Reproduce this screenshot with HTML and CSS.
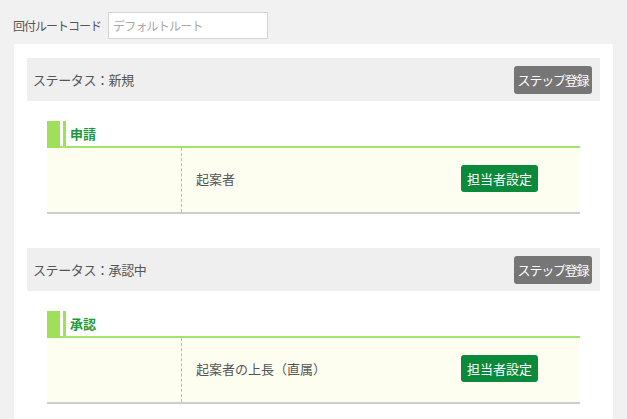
FILE: index.html
```html
<!DOCTYPE html>
<html lang="ja">
<head>
<meta charset="utf-8">
<link rel="stylesheet" href="styles.css">
</head>
<body>
<div class="top">
  <span class="label">回付ルートコード</span>
  <input class="code" type="text" placeholder="デフォルトルート">
</div>
<div class="panel">
  <div class="status">
    <span class="status-text">ステータス：新規</span>
    <button class="btn-step">ステップ登録</button>
  </div>
  <div class="step">
    <div class="step-title"><span class="mark"></span><span class="title-text">申請</span></div>
    <div class="step-body">
      <div class="cell-left"></div>
      <div class="cell-main">
        <span class="who">起案者</span>
        <button class="btn-assign">担当者設定</button>
      </div>
    </div>
  </div>
  <div class="status second">
    <span class="status-text">ステータス：承認中</span>
    <button class="btn-step">ステップ登録</button>
  </div>
  <div class="step">
    <div class="step-title"><span class="mark"></span><span class="title-text">承認</span></div>
    <div class="step-body">
      <div class="cell-left"></div>
      <div class="cell-main">
        <span class="who">起案者の上長（直属）</span>
        <button class="btn-assign">担当者設定</button>
      </div>
    </div>
  </div>
</div>
</body>
</html>
```
FILE: styles.css
```css
html, body {
  margin: 0;
  padding: 0;
}
body {
  background: #f1f1f1;
  font-family: "Noto Sans CJK JP", "Noto Sans", sans-serif;
  color: #555;
}
.top {
  display: flex;
  align-items: center;
  padding: 12px 0 0 13px;
}
.label {
  font-size: 12px;
  letter-spacing: -1px;
  color: #555;
  width: 95px;
}
.code {
  box-sizing: border-box;
  width: 160px;
  height: 27px;
  margin: 0;
  border: 1px solid #d4d4d4;
  background: #fff;
  padding: 0 4px;
  font-family: inherit;
  font-size: 12px;
  letter-spacing: -0.8px;
  outline: none;
}
.code::placeholder {
  color: #a8a8a8;
}
.panel {
  background: #fff;
  margin: 5px 14px 0 14px;
  padding: 14px 13px 15px 13px;
}
.status {
  display: flex;
  justify-content: space-between;
  align-items: center;
  height: 43px;
  background: #efefef;
  padding: 0 8px 0 6px;
}
.status.second {
  margin-top: 34px;
}
.status-text {
  font-size: 13px;
  letter-spacing: -0.4px;
  color: #555;
}
.btn-step {
  box-sizing: border-box;
  width: 78px;
  height: 28px;
  border: none;
  border-radius: 3px;
  background: #767676;
  color: #fff;
  font-family: inherit;
  font-size: 13px;
  letter-spacing: -1.2px;
  padding: 0;
}
.step {
  margin: 20px 20px 0 20px;
}
.step-title {
  display: flex;
  height: 25px;
  border-bottom: 2px solid #a3e46a;
}
.mark {
  width: 13px;
  background: #9fe05a;
  margin-right: 3px;
  margin-bottom: -2px;
}
.title-text {
  border-left: 3px solid #9fe05a;
  padding-left: 4px;
  font-size: 13px;
  font-weight: bold;
  color: #1b9a3c;
  line-height: 25px;
}
.step-body {
  display: flex;
  height: 64px;
  background: #fefef0;
  border-bottom: 2px solid #cdcdcd;
}
.cell-left {
  width: 134px;
  border-right: 1px dashed #b8b8b8;
}
.cell-main {
  flex: 1;
  display: flex;
  justify-content: space-between;
  align-items: center;
  padding: 0 42px 3px 14px;
}
.who {
  font-size: 13px;
  color: #555;
}
.btn-assign {
  box-sizing: border-box;
  width: 77px;
  height: 27px;
  border: none;
  border-radius: 3px;
  background: #0b8a3b;
  color: #fff;
  font-family: inherit;
  font-size: 13px;
  letter-spacing: 0;
  padding: 0;
}
```
